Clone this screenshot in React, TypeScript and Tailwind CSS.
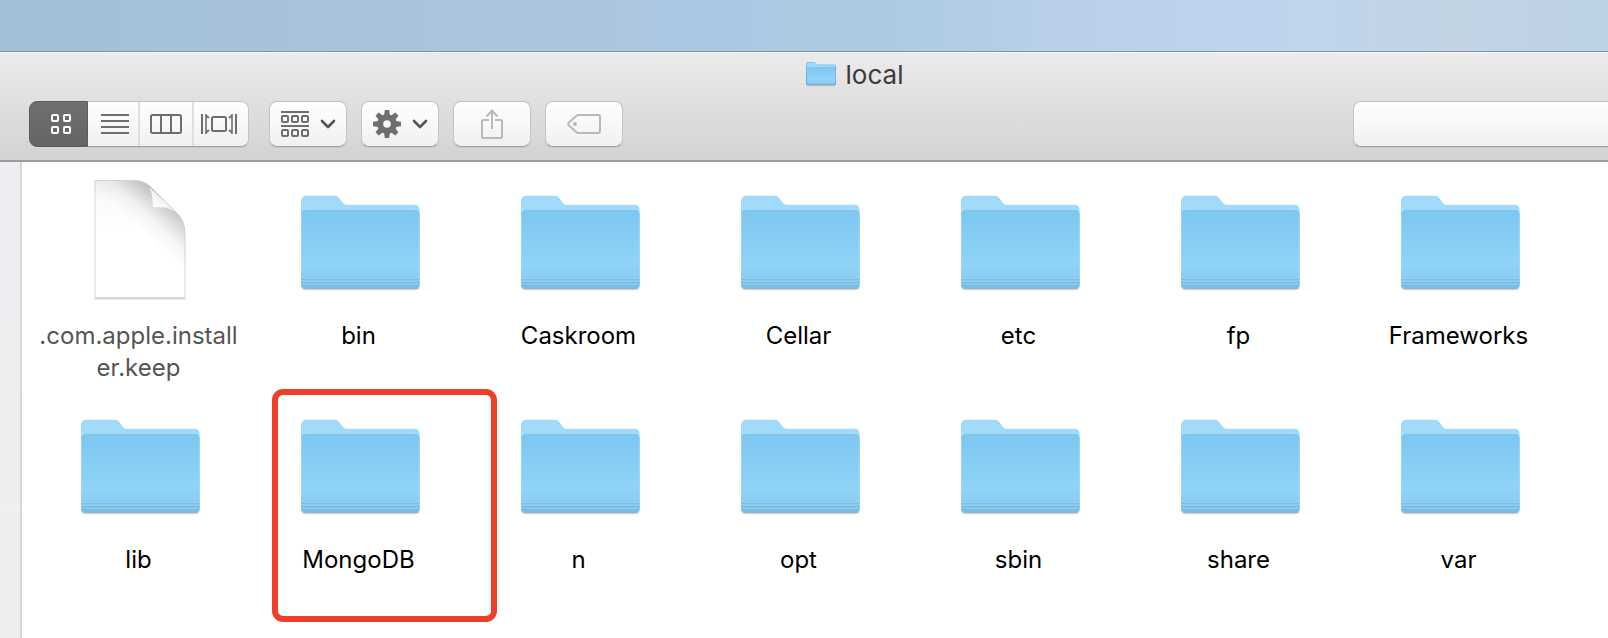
import type { ReactNode } from "react";

type Item = { name: string; kind: "folder" | "file"; marked?: boolean };

const items: Item[] = [
  { name: ".com.apple.installer.keep", kind: "file" },
  { name: "bin", kind: "folder" },
  { name: "Caskroom", kind: "folder" },
  { name: "Cellar", kind: "folder" },
  { name: "etc", kind: "folder" },
  { name: "fp", kind: "folder" },
  { name: "Frameworks", kind: "folder" },
  { name: "lib", kind: "folder" },
  { name: "MongoDB", kind: "folder", marked: true },
  { name: "n", kind: "folder" },
  { name: "opt", kind: "folder" },
  { name: "sbin", kind: "folder" },
  { name: "share", kind: "folder" },
  { name: "var", kind: "folder" },
];

function SharedGradients() {
  return (
    <svg width="0" height="0" className="absolute" aria-hidden="true">
      <defs>
        <linearGradient id="folderFront" x1="0" y1="0" x2="0" y2="1">
          <stop offset="0" stopColor="#7ec7f2" />
          <stop offset="0.35" stopColor="#86cdf5" />
          <stop offset="0.7" stopColor="#8fd4f7" />
          <stop offset="0.86" stopColor="#89cdf1" />
          <stop offset="1" stopColor="#7dbfe8" />
        </linearGradient>
        <linearGradient id="pageShade" x1="0" y1="0" x2="0" y2="1">
          <stop offset="0" stopColor="#f0f0f0" />
          <stop offset="0.15" stopColor="#fafafa" />
          <stop offset="0.4" stopColor="#ffffff" />
        </linearGradient>
        <linearGradient id="pageFold" gradientUnits="userSpaceOnUse" x1="88" y1="23" x2="60" y2="53">
          <stop offset="0" stopColor="#000000" stopOpacity="0.24" />
          <stop offset="0.3" stopColor="#000000" stopOpacity="0.13" />
          <stop offset="0.6" stopColor="#000000" stopOpacity="0.04" />
          <stop offset="1" stopColor="#000000" stopOpacity="0" />
        </linearGradient>
        <linearGradient id="pageFlap" x1="0" y1="1" x2="0.6" y2="0.4">
          <stop offset="0" stopColor="#ffffff" />
          <stop offset="0.6" stopColor="#fafafa" />
          <stop offset="1" stopColor="#e9e9e9" />
        </linearGradient>
      </defs>
    </svg>
  );
}

function FolderIcon() {
  return (
    <svg viewBox="0 0 128 128" className="size-32" aria-hidden="true">
      <rect x="5" y="40" width="118.500" height="76.500" rx="4" fill="#000" opacity="0.08" />
      <rect x="5.500" y="40" width="118" height="75.500" rx="4" fill="#5c7f96" opacity="0.4" />
      <path
        d="M5 27.500Q5 21.800 10.500 21.800H38.500Q41.500 21.800 43.300 24.100L47 29.100Q48.300 30.800 50.500 30.800H118.600Q123.600 30.800 123.600 36V110H5Z"
        fill="#a2dbfa"
      />
      <path d="M5 41.300Q5 36.300 10 36.300H118.600Q123.600 36.300 123.600 41.300V110Q123.600 114.500 119 114.500H9.500Q5 114.500 5 110Z" fill="url(#folderFront)" />
      <path d="M5.500 41.300Q5.500 36.700 10 36.700H118.600Q123.200 36.700 123.200 41.300" fill="none" stroke="#79c0ea" strokeWidth="0.8" />
      <path d="M5.500 41V110M123.200 41V110" stroke="#a4dcf8" strokeWidth="0.8" opacity="0.7" />
      <path d="M5 105.500H123.600M5 108.500H123.600M5 111.500H123.600" stroke="#72b2dc" strokeWidth="1" opacity="0.6" />
      <path d="M5 104.500H123.600M5 107.500H123.600M5 110.500H123.600" stroke="#93d2f4" strokeWidth="1" opacity="0.6" />
      <path d="M8 114H121" stroke="#69a8d0" strokeWidth="1" opacity="0.7" />
    </svg>
  );
}

function FileIcon() {
  const page = "M19 6.500H59Q68 6.500 75 13L99 37Q109 46 109 59V123.500H19Z";
  return (
    <svg viewBox="0 0 128 128" className="size-32" aria-hidden="true">
      <path d="M18.500 124.700H109.500" stroke="#000" strokeWidth="1.500" opacity="0.14" />
      <path d={page} fill="url(#pageShade)" />
      <path d={page} fill="url(#pageFold)" />
      <path d="M68 8.500C75 13 77 20 76.800 33.500C86 32.500 94 33.500 101 38.500Z" fill="url(#pageFlap)" />
      <path d={page} fill="none" stroke="#d3d3d3" strokeWidth="1" />
    </svg>
  );
}

function SmallFolderIcon() {
  return (
    <svg viewBox="0 0 32 26" width="32" height="26" aria-hidden="true">
      <rect x="1.500" y="10" width="29" height="15.300" rx="1.500" fill="#000" opacity="0.18" />
      <path d="M1 2.500Q1 1 2.500 1H9.500L11.500 3.500H29.500Q31 3.500 31 5V22H1Z" fill="#7fc6ec" />
      <path d="M2 3Q2 2 3 2H9L11 4.500H30V7H2Z" fill="#a0dbf9" />
      <rect x="1" y="6" width="30" height="18" rx="1" fill="url(#folderFront)" />
      <path d="M1.500 6V23.500H30.500V6" fill="none" stroke="#6fb5de" strokeWidth="1" />
    </svg>
  );
}

function Chevron() {
  return (
    <svg viewBox="0 0 16 10" width="16" height="10" fill="none" stroke="#555" strokeWidth="2.600" strokeLinecap="round" strokeLinejoin="round" aria-hidden="true">
      <path d="M2 2L8 8L14 2" />
    </svg>
  );
}

function GridGlyph() {
  return (
    <svg viewBox="0 0 20 20" width="20" height="20" fill="none" stroke="#fff" strokeWidth="2" aria-hidden="true">
      <rect x="1" y="1" width="6" height="6" rx="1" />
      <rect x="13" y="1" width="6" height="6" rx="1" />
      <rect x="1" y="13" width="6" height="6" rx="1" />
      <rect x="13" y="13" width="6" height="6" rx="1" />
    </svg>
  );
}

function ListGlyph() {
  return (
    <svg viewBox="0 0 28 20" width="28" height="20" stroke="#6e6e6e" strokeWidth="2" aria-hidden="true">
      <path d="M0 1H28M0 7H28M0 13H28M0 19H28" />
    </svg>
  );
}

function ColumnsGlyph() {
  return (
    <svg viewBox="0 0 32 20" width="32" height="20" fill="none" stroke="#6e6e6e" strokeWidth="2" aria-hidden="true">
      <rect x="1" y="1" width="30" height="18" rx="1.500" />
      <path d="M11 1V19M21 1V19" />
    </svg>
  );
}

function CoverFlowGlyph() {
  return (
    <svg viewBox="0 0 36 20" width="36" height="20" fill="none" stroke="#6e6e6e" strokeWidth="2" aria-hidden="true">
      <path d="M1 0V20M35 0V20" />
      <path d="M5 0V20M31 0V20" strokeWidth="1.600" />
      <path d="M5 1.500L8 4M5 18.500L8 16M31 1.500L28 4M31 18.500L28 16" strokeWidth="1.800" />
      <rect x="11" y="3" width="14" height="14" rx="1.500" />
    </svg>
  );
}

function ArrangeGlyph() {
  return (
    <svg viewBox="0 0 28 26" width="28" height="26" fill="none" stroke="#6e6e6e" strokeWidth="2" aria-hidden="true">
      <path d="M0 1H28M0 15H28" />
      {[1, 11, 21].map((x) => (
        <g key={x}>
          <rect x={x} y="5" width="6" height="6" rx="1" />
          <rect x={x} y="19" width="6" height="6" rx="1" />
        </g>
      ))}
    </svg>
  );
}

function GearGlyph() {
  return (
    <svg viewBox="-14 -14 28 28" width="28" height="28" aria-hidden="true">
      {[0, 45, 90, 135, 180, 225, 270, 315].map((angle) => (
        <path key={angle} d="M-3.200 -7L-2.200 -14H2.200L3.200 -7Z" fill="#6e6e6e" transform={`rotate(${angle})`} />
      ))}
      <circle r="6.800" fill="none" stroke="#6e6e6e" strokeWidth="6" />
    </svg>
  );
}

function ShareGlyph() {
  return (
    <svg viewBox="0 0 22 30" width="22" height="30" fill="none" stroke="#b9b9b9" strokeWidth="2" aria-hidden="true">
      <path d="M8 11H2Q1 11 1 12V28Q1 29 2 29H20Q21 29 21 28V12Q21 11 20 11H14" />
      <path d="M11 20V2M5.500 7.500L11 1.500L16.500 7.500" />
    </svg>
  );
}

function TagGlyph() {
  return (
    <svg viewBox="0 0 34 20" width="34" height="20" fill="none" stroke="#b9b9b9" strokeWidth="2" strokeLinejoin="round" aria-hidden="true">
      <path d="M11.500 1H31Q33 1 33 3V17Q33 19 31 19H11.500Q10.300 19 9.500 18.200L1.700 11.200Q0.500 10 1.700 8.800L9.500 1.800Q10.300 1 11.500 1Z" />
      <circle cx="8" cy="10" r="2" fill="#b9b9b9" stroke="none" />
    </svg>
  );
}

const raised =
  "border border-[#c3c3c4] border-b-[#a3a3a4] bg-linear-to-b from-white to-[#f0f0f0] shadow-[0_1px_0_#c6c6c8]";

function ToolButton({ label, children }: { label: string; children: ReactNode }) {
  return (
    <button
      type="button"
      aria-label={label}
      className={`flex h-[46px] w-[78px] items-center justify-center gap-[11px] rounded-lg ${raised}`}
    >
      {children}
    </button>
  );
}

function Toolbar() {
  return (
    <div className="flex items-center pl-[29px]">
      <div role="group" aria-label="View" className="flex h-[46px] rounded-lg">
        <button
          type="button"
          aria-label="Icons"
          aria-pressed="true"
          className="flex w-[59px] items-center justify-center rounded-l-lg border border-[#5c5c5c] bg-linear-to-b from-[#6f6f6f] to-[#656565] pl-1"
        >
          <GridGlyph />
        </button>
        <div className={`flex rounded-r-lg border-l-0 ${raised}`}>
          <button type="button" aria-label="List" className="flex w-[52px] items-center justify-center border-r-2 border-[#dedede] pl-1">
            <ListGlyph />
          </button>
          <button type="button" aria-label="Columns" className="flex w-[54px] items-center justify-center border-r-2 border-[#dedede]">
            <ColumnsGlyph />
          </button>
          <button type="button" aria-label="Cover Flow" className="flex w-[54px] items-center justify-center pr-1">
            <CoverFlowGlyph />
          </button>
        </div>
      </div>
      <div className="ml-5 flex gap-[14px]">
        <ToolButton label="Arrange items">
          <ArrangeGlyph />
          <Chevron />
        </ToolButton>
        <ToolButton label="Actions">
          <GearGlyph />
          <Chevron />
        </ToolButton>
        <ToolButton label="Share">
          <ShareGlyph />
        </ToolButton>
        <ToolButton label="Edit tags">
          <TagGlyph />
        </ToolButton>
      </div>
      <input
        type="search"
        aria-label="Search"
        className={`ml-auto h-[46px] w-[255px] rounded-l-lg border-r-0 px-3 text-2xl outline-none ${raised}`}
      />
    </div>
  );
}

function Tile({ item }: { item: Item }) {
  const isFile = item.kind === "file";
  return (
    <li className="relative flex flex-col items-center gap-[18px]">
      {item.marked && (
        <span className="absolute -top-[9px] left-[22px] h-[233px] w-[225px] rounded-[11px] border-6 border-[#ee4028]" />
      )}
      {isFile ? <FileIcon /> : <FolderIcon />}
      <span className={`w-[206px] pr-[3px] text-center text-2xl leading-8 break-all ${isFile ? "text-[#555]" : "text-black"}`}>
        {item.name}
      </span>
    </li>
  );
}

export default function App() {
  return (
    <div className="flex h-screen flex-col overflow-hidden bg-[linear-gradient(to_right,#a3bfd8,#abc4e0_30%,#adcae5_55%,#bad0ea_66%,#c0d5ed_80%,#c2d4e4_90%,#bed2e6)] font-[Inter,'Liberation_Sans',sans-serif]">
      <SharedGradients />
      <main className="mt-[51px] flex min-h-0 flex-1 flex-col border-t border-[#7f93ab] bg-white">
        <header className="border-t border-b-2 border-t-[#f8f8f8] border-b-[#9c9c9d] bg-linear-to-b from-[#ebebec] to-[#d3d3d5] pb-[13px]">
          <h1 className="flex h-12 items-center justify-center gap-[9px] pb-[6px] pl-[100px] text-[26px] text-[#3b3b3b]">
            <SmallFolderIcon />
            local
          </h1>
          <Toolbar />
        </header>
        <div className="flex min-h-0 flex-1">
          <aside className="w-[22px] shrink-0 border-r-2 border-[#d6d7da] bg-linear-to-b from-[#eceef3] to-[#efefef] to-60%" />
          <ul className="grid flex-1 auto-rows-[224px] grid-cols-[repeat(auto-fill,220px)] content-start pt-3 pl-2">
            {items.map((item) => (
              <Tile key={item.name} item={item} />
            ))}
          </ul>
        </div>
      </main>
    </div>
  );
}
